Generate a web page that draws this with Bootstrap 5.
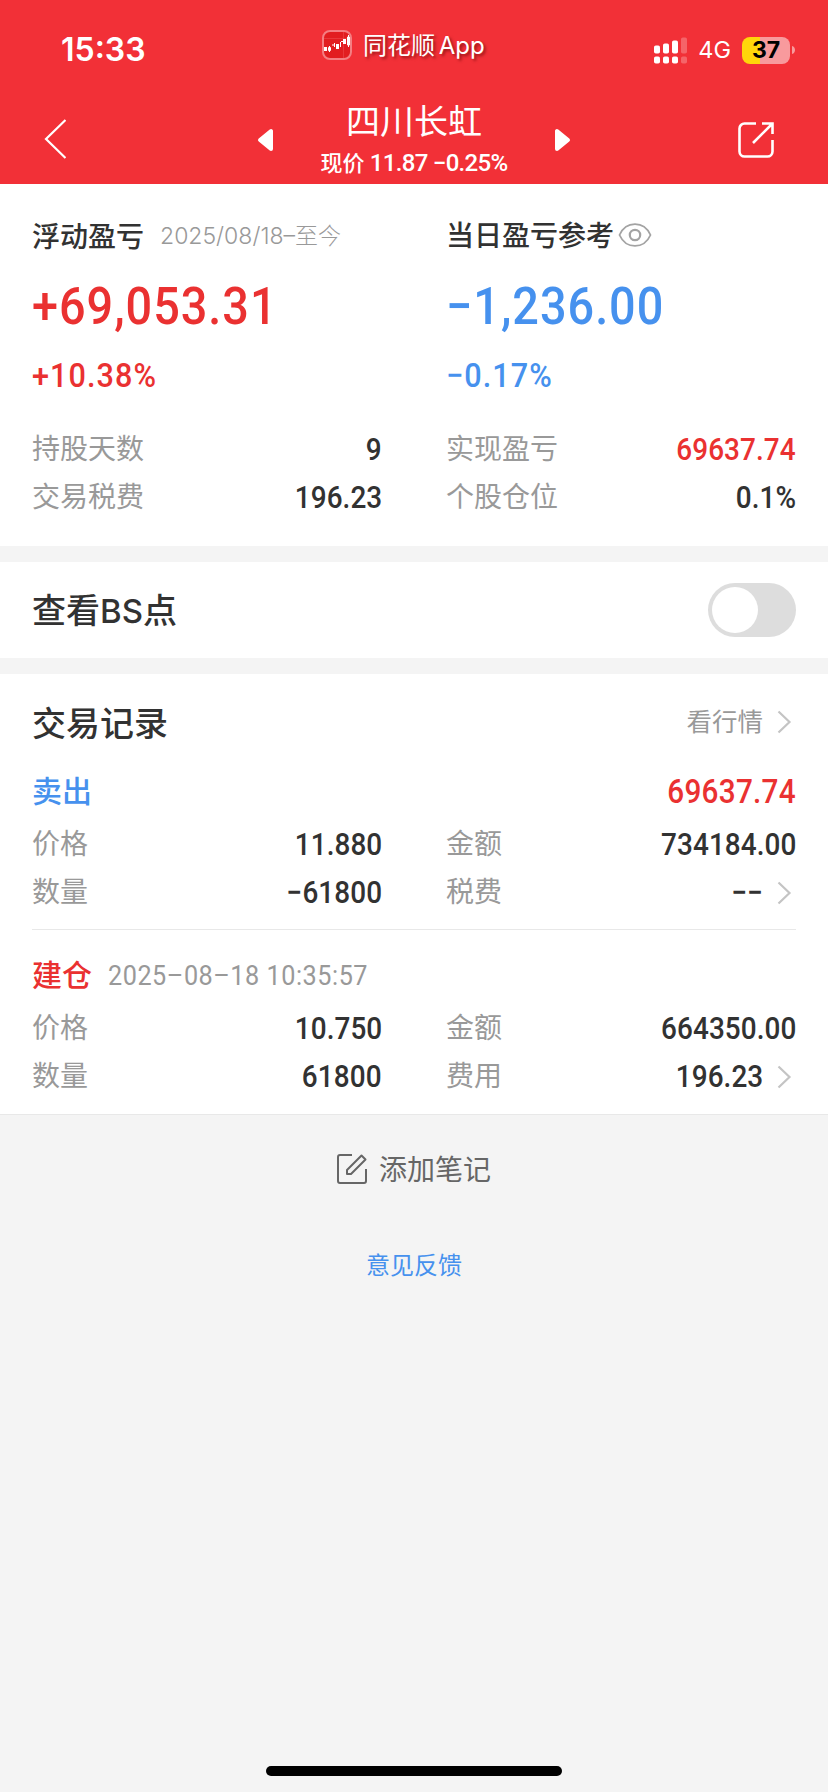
<!DOCTYPE html>
<html lang="zh-CN">
<head>
<meta charset="utf-8">
<meta name="viewport" content="width=device-width, initial-scale=1">
<title>四川长虹</title>
<link href="https://cdn.jsdelivr.net/npm/bootstrap@5.3.0/dist/css/bootstrap.min.css" rel="stylesheet">
<style>
:root{--up:#ea3131;--down:#4691ee;--ink:#323232;--mute:#999}
body{background:#f4f4f4;color:var(--ink);font-family:Roboto,"Noto Sans CJK SC",sans-serif;font-size:28px;line-height:48px;height:1792px}
svg{display:block;flex:none}
.up{color:var(--up)}.down{color:var(--down)}.mute{color:var(--mute)}
.topbar{background:#f23037;color:#fff;height:184px}
.status-row{height:90px;padding:0 33px 0 61px}
.clock{font:600 32px/40px Inter,sans-serif;width:261px;padding-top:30px}
.app-label{font-size:24px;line-height:30px;padding-top:30px;gap:11px;text-shadow:2px 2px 3px rgba(90,0,0,.6);font-family:Inter,"Noto Sans CJK SC",sans-serif;white-space:nowrap}
.app-label span{padding-top:1px;word-spacing:-3px}
.net{font:400 23.5px/28px Inter,sans-serif;margin:0 11px 0 10px}
.battery{width:48px;height:27px;border-radius:8px;background:linear-gradient(90deg,#ffd60a 37%,#f89a9d 37%);color:#000;font:700 23px/27px Inter,sans-serif}
.nav-row{height:94px;padding:0 54px 0 44px}
.back{width:46px;padding-top:28px}
.stock{width:280px}
.stock-name{font-size:34px;line-height:40px;margin-top:12px}
.stock-price{font-size:24px;line-height:30px;margin-top:6px;font-weight:500;letter-spacing:-.7px;white-space:nowrap}
.stock-price span{font-size:22px;font-weight:500;letter-spacing:0}
.panel{background:#fff;padding:0 32px}
.halves{display:grid;grid-template-columns:350px 350px;column-gap:64px}
.heading{font-weight:500;font-size:28px;line-height:40px;height:40px;padding-top:2px}
.period{font:300 23px/37px Inter,"Noto Sans CJK SC",sans-serif;margin-left:16px}
/* figures are set slightly condensed */
.total,.rate,.stamp,.fig{display:block;transform:scaleX(.9);transform-origin:left center;font-weight:500;white-space:nowrap}
.total{font-size:52px;line-height:60px;letter-spacing:1.1px;margin-top:21px}
.rate{font-size:34px;line-height:40px;letter-spacing:1.2px;margin-top:18px}
.pair{height:48px;padding-top:1px}
.fig{font-size:31px;letter-spacing:.1px;transform-origin:right center}
.fig-lg{font-size:33px;letter-spacing:.3px}
.caption{font-size:34px;font-weight:500;padding-top:2px}
.caption span{font:500 33px/1 Inter,sans-serif}
.form-switch .toggle{width:88px;height:54px;margin:0;border:0;background-color:#ddd;background-size:46px 46px;background-position:4px center;background-image:url("data:image/svg+xml,%3csvg xmlns='http://www.w3.org/2000/svg' viewBox='-4 -4 8 8'%3e%3ccircle r='4' fill='white'/%3e%3c/svg%3e");background-repeat:no-repeat}
.trade{padding-top:16px;height:184px}
.trade:not(:last-child){border-bottom:1px solid #e8e8e8}
.trade-head{height:58px;padding-top:2px}
.side{font-size:30px;font-weight:500}
.stamp{font-size:28px;font-weight:400;letter-spacing:.6px;margin-left:16px}
.more{margin-left:14px;margin-right:4px}
.note{color:#666;gap:12px;margin-top:30px}
.note span{padding-top:2px;margin-bottom:-2px}
.feedback{font-size:24px;margin-top:49px}
.home-bar{width:296px;height:10px;border-radius:5px;background:#000;bottom:16px}
</style>
</head>
<body class="position-relative">
<svg width="0" height="0" class="position-absolute"><symbol id="chev" viewBox="0 0 15 24"><path d="M1.5 1.5 12.5 12 1.5 22.5" fill="none" stroke="#c4c4c4" stroke-width="2.2"/></symbol></svg>

<header class="topbar">
  <div class="status-row d-flex">
    <div class="clock">15:33</div>
    <div class="app-label d-flex">
      <svg width="30" height="30" viewBox="0 0 30 30"><rect x="1" y="1" width="28" height="28" rx="7" fill="#e21d20" stroke="#f47e82" stroke-width="2"/><path d="M2 8.5H28M21.500 2V28" stroke="#ee4a4c" stroke-width=".6"/><path d="M2 17h3v4H2zM14 14h3v5h-3zM21 9h3v5h-3z" fill="#fff"/><path d="M7.500 16v6M6.500 17.500h2v3h-2zM10 15h2M12.500 13v4M18.500 12v5M19 11.500h2M26.500 5v12M25.500 7h2v8h-2z" fill="none" stroke="#fff" stroke-width="1"/></svg>
      <span>同花顺 App</span>
    </div>
    <div class="d-flex align-items-center ms-auto" style="height:100px">
      <svg width="34" height="27" viewBox="0 0 34 27" fill="#fff"><rect y="8.500" width="6" height="8" rx="1.800"/><rect x="9" y="6.500" width="6" height="10" rx="1.800"/><rect x="18" y="3.500" width="6" height="13" rx="1.800"/><rect y="19.500" width="6" height="7" rx="1.800"/><rect x="9" y="19.500" width="6" height="7" rx="1.800"/><rect x="18" y="19.500" width="6" height="7" rx="1.800"/><g opacity=".25"><rect x="27" y=".5" width="6" height="16" rx="1.800"/><rect x="27" y="19.500" width="6" height="7" rx="1.800"/></g></svg>
      <span class="net">4G</span>
      <div class="battery text-center">37</div>
      <svg width="5" height="10" viewBox="0 0 5 10"><path d="M2 1c4 1 4 7 0 8z" fill="#f89a9d"/></svg>
    </div>
  </div>
  <div class="nav-row d-flex justify-content-between">
    <div class="back"><svg width="22" height="42" viewBox="0 0 22 42"><path d="M21.500 2 2 21 21.500 40" fill="none" stroke="#fff" stroke-width="2.200"/></svg></div>
    <div class="d-flex">
      <svg width="17" height="24" viewBox="0 0 17 24" style="margin-top:38px"><path d="M14 3v18L3 12z" fill="#fff" stroke="#fff" stroke-width="4" stroke-linejoin="round"/></svg>
      <div class="stock text-center">
        <div class="stock-name">四川长虹</div>
        <div class="stock-price"><span>现价</span> 11.87 −0.25%</div>
      </div>
      <svg width="17" height="24" viewBox="0 0 17 24" style="margin-top:38px"><path d="M3 3v18L14 12z" fill="#fff" stroke="#fff" stroke-width="4" stroke-linejoin="round"/></svg>
    </div>
    <svg width="36" height="36" viewBox="0 0 36 36" style="margin-top:32px" fill="none" stroke="#fff" stroke-width="2.600"><path d="M18 1.500H6.500a5 5 0 0 0-5 5v23a5 5 0 0 0 5 5h23a5 5 0 0 0 5-5V18M24 1.500h10.500V12M34 2 15 21"/></svg>
  </div>
</header>

<main>
  <section class="panel" style="height:362px;padding-top:32px">
    <div class="halves">
      <div>
        <div class="d-flex heading">浮动盈亏<span class="period mute">2025/08/18–至今</span></div>
        <div class="total up">+69,053.31</div>
        <div class="rate up">+10.38%</div>
      </div>
      <div>
        <div class="d-flex align-items-center heading">当日盈亏参考
          <svg width="34" height="26" viewBox="0 0 34 26" class="ms-1 mb-1" fill="none" stroke="#a3a3a3"><path d="M1.500 13C8-1.500 26-1.500 32.500 13 26 27.500 8 27.500 1.500 13z" stroke-width="1.800"/><circle cx="17" cy="13" r="5.200" stroke-width="2.200"/></svg>
        </div>
        <div class="total down">−1,236.00</div>
        <div class="rate down">−0.17%</div>
      </div>
    </div>
    <div class="halves" style="margin-top:30px">
      <div class="pair d-flex justify-content-between"><span class="mute">持股天数</span><span class="fig">9</span></div>
      <div class="pair d-flex justify-content-between"><span class="mute">实现盈亏</span><span class="fig up">69637.74</span></div>
      <div class="pair d-flex justify-content-between"><span class="mute">交易税费</span><span class="fig">196.23</span></div>
      <div class="pair d-flex justify-content-between"><span class="mute">个股仓位</span><span class="fig">0.1%</span></div>
    </div>
  </section>

  <section class="panel d-flex align-items-center justify-content-between my-3" style="height:96px">
    <label class="caption" for="bs">查看<span>BS</span>点</label>
    <div class="form-check form-switch p-0 m-0 d-flex"><input class="form-check-input toggle" type="checkbox" role="switch" id="bs"></div>
  </section>

  <section class="panel" style="padding-top:24px;height:441px;border-bottom:1px solid #e8e8e8">
    <div class="d-flex justify-content-between" style="height:48px">
      <div class="caption">交易记录</div>
      <div class="d-flex align-items-center mute" style="font-size:25.500px">看行情<svg class="more" width="15" height="24"><use href="#chev"/></svg></div>
    </div>
    <div class="trade">
      <div class="trade-head d-flex align-items-center justify-content-between"><span class="side down">卖出</span><span class="fig fig-lg up">69637.74</span></div>
      <div class="halves">
        <div class="pair d-flex justify-content-between"><span class="mute">价格</span><span class="fig">11.880</span></div>
        <div class="pair d-flex justify-content-between"><span class="mute">金额</span><span class="fig">734184.00</span></div>
        <div class="pair d-flex justify-content-between"><span class="mute">数量</span><span class="fig">−61800</span></div>
        <div class="pair d-flex"><span class="mute me-auto">税费</span><span class="fig">−−</span><svg class="more align-self-center" width="15" height="24"><use href="#chev"/></svg></div>
      </div>
    </div>
    <div class="trade">
      <div class="trade-head d-flex align-items-center"><span class="side up">建仓</span><span class="stamp mute">2025–08–18 10:35:57</span></div>
      <div class="halves">
        <div class="pair d-flex justify-content-between"><span class="mute">价格</span><span class="fig">10.750</span></div>
        <div class="pair d-flex justify-content-between"><span class="mute">金额</span><span class="fig">664350.00</span></div>
        <div class="pair d-flex justify-content-between"><span class="mute">数量</span><span class="fig">61800</span></div>
        <div class="pair d-flex"><span class="mute me-auto">费用</span><span class="fig">196.23</span><svg class="more align-self-center" width="15" height="24"><use href="#chev"/></svg></div>
      </div>
    </div>
  </section>

  <div class="note d-flex align-items-center justify-content-center">
    <svg width="30" height="30" viewBox="0 0 30 30" fill="none" stroke="#666" stroke-width="2"><path d="M15 1H3a2 2 0 0 0-2 2v24a2 2 0 0 0 2 2h24a2 2 0 0 0 2-2V15M10 20v-4L24.500 1.500l4 4L14 20z" stroke-linejoin="round"/></svg>
    <span>添加笔记</span>
  </div>
  <div class="feedback down text-center">意见反馈</div>
</main>
<div class="home-bar position-absolute start-50 translate-middle-x"></div>
<script src="https://cdn.jsdelivr.net/npm/bootstrap@5.3.0/dist/js/bootstrap.bundle.min.js"></script>
</body>
</html>
